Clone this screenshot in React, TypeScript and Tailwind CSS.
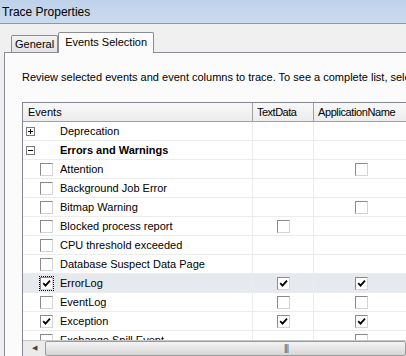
import React from 'react';

type Row = {
  name: string;
  kind: 'group' | 'item';
  expanded?: boolean;
  checked?: boolean;
  text?: boolean | null;
  app?: boolean | null;
  selected?: boolean;
};

const rows: Row[] = [
  { name: 'Deprecation', kind: 'group', expanded: false },
  { name: 'Errors and Warnings', kind: 'group', expanded: true },
  { name: 'Attention', kind: 'item', checked: false, text: null, app: false },
  { name: 'Background Job Error', kind: 'item', checked: false, text: null, app: null },
  { name: 'Bitmap Warning', kind: 'item', checked: false, text: null, app: false },
  { name: 'Blocked process report', kind: 'item', checked: false, text: false, app: null },
  { name: 'CPU threshold exceeded', kind: 'item', checked: false, text: null, app: null },
  { name: 'Database Suspect Data Page', kind: 'item', checked: false, text: null, app: null },
  { name: 'ErrorLog', kind: 'item', checked: true, text: true, app: true, selected: true },
  { name: 'EventLog', kind: 'item', checked: false, text: false, app: false },
  { name: 'Exception', kind: 'item', checked: true, text: true, app: true },
  { name: 'Exchange Spill Event', kind: 'item', checked: false, text: null, app: false },
];

function CheckBox({ checked, focus }: { checked: boolean; focus?: boolean }) {
  return (
    <span className={`flex h-[15px] w-[15px] items-center justify-center ${focus ? 'outline-1 -outline-offset-1 outline-dotted outline-black' : ''}`}>
      <span className="relative block h-[13px] w-[13px] border border-t-[#8a8a8a] border-l-[#8a8a8a] border-b-[#d4d4d4] border-r-[#d4d4d4] bg-white">
        {checked && (
          <svg className="absolute left-[1px] top-[1px]" width="9" height="9" viewBox="0 0 9 9">
            <path d="M1.2 4.2 L3.5 6.6 L8 1.6" stroke="#000" strokeWidth="1.8" fill="none" />
          </svg>
        )}
      </span>
    </span>
  );
}

function Expander({ open }: { open: boolean }) {
  return (
    <span className="relative block h-[9px] w-[9px] border border-[#7a7a7a] bg-white">
      <span className="absolute left-[1px] top-[3px] h-px w-[5px] bg-black" />
      {!open && <span className="absolute left-[3px] top-[1px] h-[5px] w-px bg-black" />}
    </span>
  );
}

export default function App() {
  return (
    <div
      className="flex h-[356px] w-[406px] flex-col overflow-hidden bg-[#f0f0f0] text-[11px] text-black"
      style={{ fontFamily: '"Liberation Sans", Arial, sans-serif' }}
    >
      <div className="flex h-[24px] shrink-0 items-center border-b border-[#8799b0] bg-gradient-to-b from-[#bdd2ea] to-[#cbdbee] pl-[2px] text-[12px]">
        Trace Properties
      </div>

      <div className="flex h-[28px] shrink-0 items-end pl-[11px]">
        <div className="flex h-[17px] items-center rounded-t-[2px] border border-b-0 border-[#898c95] bg-gradient-to-b from-[#f2f2f2] to-[#e3e3e3] px-[3px]">
          General
        </div>
        <div className="relative top-px flex h-[21px] items-center rounded-t-[2px] border border-b-0 border-[#898c95] bg-[#fbfbfb] px-[6px] pb-[2px]">
          Events Selection
        </div>
      </div>

      <div className="ml-[4px] flex min-h-0 flex-1 flex-col border-l border-t border-[#898c95] bg-[#fbfbfb] pl-[17px]">
        <p className="mt-[16px] whitespace-nowrap leading-[16px]">
          Review selected events and event columns to trace. To see a complete list, select
        </p>

        <div className="mt-[17px] flex min-h-0 flex-1 flex-col border-l border-t border-[#828790] bg-white">
          <div className="flex h-[19px] shrink-0">
            <div className="flex w-[230px] shrink-0 items-center border-b border-r border-[#a0a0a0] bg-gradient-to-b from-[#f8f8f8] to-[#ececec] pl-[5px]">
              Events
            </div>
            <div className="flex w-[61px] shrink-0 items-center border-b border-r border-[#a0a0a0] bg-gradient-to-b from-[#f8f8f8] to-[#ececec] pl-[4px] tracking-[-0.5px]">
              TextData
            </div>
            <div className="flex w-[95px] shrink-0 items-center border-b border-r border-[#a0a0a0] bg-gradient-to-b from-[#f8f8f8] to-[#ececec] pl-[4px] tracking-[-0.4px]">
              ApplicationName
            </div>
          </div>

          <div className="min-h-0 flex-1 overflow-hidden">
            {rows.map((r) => (
              <div key={r.name} className={`flex h-[19px] ${r.selected ? 'bg-[#e6e9ee]' : ''}`}>
                <div className="flex w-[230px] shrink-0 items-center border-b border-r border-[#ececec] pl-[3px]">
                  <span className="flex w-[13px]">
                    {r.kind === 'group' && <Expander open={!!r.expanded} />}
                  </span>
                  <span className="flex w-[15px]">
                    {r.kind === 'item' && <CheckBox checked={!!r.checked} focus={r.selected} />}
                  </span>
                  <span className={`whitespace-nowrap pl-[6px] ${r.kind === 'group' && r.expanded ? 'font-bold' : ''}`}>{r.name}</span>
                </div>
                <div className="flex w-[61px] shrink-0 items-center justify-center border-b border-r border-[#ececec]">
                  {r.text !== null && r.text !== undefined && <CheckBox checked={r.text} />}
                </div>
                <div className="flex w-[95px] shrink-0 items-center justify-center border-b border-[#ececec]">
                  {r.app !== null && r.app !== undefined && <CheckBox checked={r.app} />}
                </div>
              </div>
            ))}
          </div>

          <div className="flex h-[16px] shrink-0 items-center border-t border-[#c8c8c8] bg-[#ebebeb]">
            <span className="flex w-[22px] items-center justify-center text-[7px] text-[#444]">◀</span>
            <div className="flex h-[15px] flex-1 items-center rounded-[2px] border border-[#9a9a9a] bg-gradient-to-b from-[#f4f4f4] to-[#d6d6d6] pl-[238px] text-[9px] leading-none tracking-[-1px] text-[#555]">
              |||
            </div>
          </div>
        </div>
      </div>
    </div>
  );
}
